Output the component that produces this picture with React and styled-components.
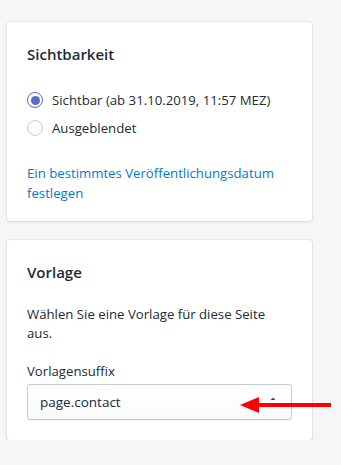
import React from 'react';
import styled, {createGlobalStyle} from 'styled-components';

const GlobalStyle = createGlobalStyle`
    body {
        margin: 0;
        background: #f4f6f8;
        font-family: "Open Sans", "Noto Sans", sans-serif;
        color: #212b36;
    }
`

const Page = styled.div`
    width: 305px;
    padding: 22px 0 0 7px;
    display: flex;
    flex-direction: column;
    gap: 19px;
`
const Card = styled.section`
    background: #fff;
    border-radius: 3px;
    box-shadow: 0 0 0 1px rgba(63, 63, 68, 0.05), 0 1px 3px 0 rgba(63, 63, 68, 0.15);
    padding: 20px 20px ${p => p.bottom}px;
`
const Title = styled.h2`
    margin: 0 0 ${p => p.gap}px;
    font-size: 15px;
    line-height: 24px;
    font-weight: 600;
`
const RadioList = styled.ul`
    list-style: none;
    margin: 0 0 25px;
    padding: 0;
    display: flex;
    flex-direction: column;
    gap: 8px;
`
const RadioRow = styled.li`
    display: flex;
    align-items: center;
    gap: 9px;
    font-size: 13.2px;
    line-height: 20px;
`
const RadioDot = styled.span`
    box-sizing: border-box;
    width: 16px;
    height: 16px;
    border-radius: 50%;
    flex: none;
    position: relative;
    border: ${p => p.checked ? '1.5px solid #5c6ac4' : '1px solid #c4cdd5'};
    background: linear-gradient(180deg, #fff, #f9fafb);
    &::after {
        content: '';
        display: ${p => p.checked ? 'block' : 'none'};
        position: absolute;
        inset: 2.5px;
        border-radius: 50%;
        background: #5c6ac4;
    }
`
const Link = styled.a`
    display: block;
    color: #007ace;
    font-size: 13.2px;
    line-height: 20px;
    text-decoration: none;
`
const Text = styled.p`
    margin: 0 0 18px;
    font-size: 13.2px;
    line-height: 19px;
`
const Label = styled.div`
    font-size: 13.2px;
    line-height: 20px;
    margin-bottom: 3px;
`
const SelectBox = styled.div`
    position: relative;
    box-sizing: border-box;
    height: 36px;
    display: flex;
    align-items: center;
    padding: 0 12px;
    border: 1px solid #c4cdd5;
    border-radius: 3px;
    background: linear-gradient(180deg, #fff, #f9fafb);
    box-shadow: 0 1px 0 0 rgba(22, 29, 37, 0.05);
    font-size: 13.5px;
`
const Caret = styled.svg`
    position: absolute;
    right: 8px;
    top: 7px;
`
const Annotation = styled.svg`
    position: absolute;
    left: 212px;
    top: 11px;
    overflow: visible;
`

const Radio = ({checked, label}) => (
    <RadioRow>
        <RadioDot checked={checked}/>
        <span>{label}</span>
    </RadioRow>
)

export default function App() {
    return (
        <>
            <GlobalStyle/>
            <Page>
                <Card bottom={18}>
                    <Title gap={24}>Sichtbarkeit</Title>
                    <RadioList>
                        <Radio checked label="Sichtbar (ab 31.10.2019, 11:57 MEZ)"/>
                        <Radio label="Ausgeblendet"/>
                    </RadioList>
                    <Link href="#">Ein bestimmtes Veröffentlichungsdatum festlegen</Link>
                </Card>
                <Card bottom={20}>
                    <Title gap={21}>Vorlage</Title>
                    <Text>Wählen Sie eine Vorlage für diese Seite aus.</Text>
                    <Label>Vorlagensuffix</Label>
                    <SelectBox>
                        page.contact
                        <Caret width="20" height="20" viewBox="0 0 20 20">
                            <path d="M7.5 8h5L10 5.5zM7.5 12h5L10 14.5z" fill="#454f5b"/>
                        </Caret>
                        <Annotation width="91" height="18" viewBox="0 0 91 18">
                            <path d="M18 7h73v4H18z" fill="#f00"/>
                            <path d="M0 9L19 1v16z" fill="#f00"/>
                        </Annotation>
                    </SelectBox>
                </Card>
            </Page>
        </>
    );
}
